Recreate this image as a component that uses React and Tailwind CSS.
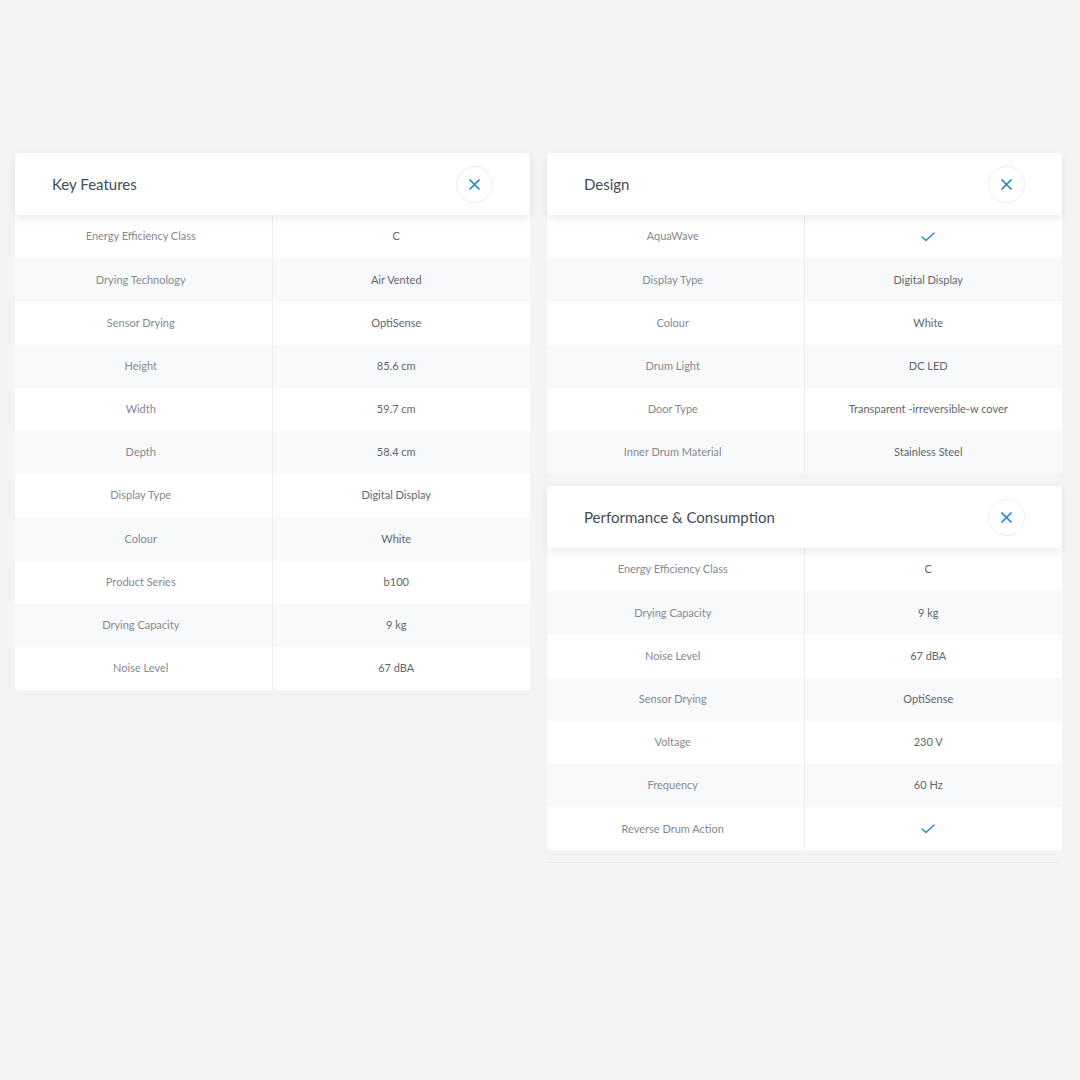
import React from 'react';

const keyFeatures = [
  ['Energy Efficiency Class', 'C'],
  ['Drying Technology', 'Air Vented'],
  ['Sensor Drying', 'OptiSense'],
  ['Height', '85.6 cm'],
  ['Width', '59.7 cm'],
  ['Depth', '58.4 cm'],
  ['Display Type', 'Digital Display'],
  ['Colour', 'White'],
  ['Product Series', 'b100'],
  ['Drying Capacity', '9 kg'],
  ['Noise Level', '67 dBA'],
];

const design = [
  ['AquaWave', true],
  ['Display Type', 'Digital Display'],
  ['Colour', 'White'],
  ['Drum Light', 'DC LED'],
  ['Door Type', 'Transparent -irreversible-w cover'],
  ['Inner Drum Material', 'Stainless Steel'],
];

const performance = [
  ['Energy Efficiency Class', 'C'],
  ['Drying Capacity', '9 kg'],
  ['Noise Level', '67 dBA'],
  ['Sensor Drying', 'OptiSense'],
  ['Voltage', '230 V'],
  ['Frequency', '60 Hz'],
  ['Reverse Drum Action', true],
];

const Check = () => (
  <svg width="14" height="10" viewBox="0 0 14 10" fill="none">
    <path d="M1 5 L5 8.6 L13 1" stroke="#1b88cf" strokeWidth="1.4" strokeLinecap="round" strokeLinejoin="round" />
  </svg>
);

const Close = () => (
  <button className="w-[37px] h-[37px] rounded-full border border-[#eceef1] bg-white flex items-center justify-center">
    <svg width="11" height="11" viewBox="0 0 11 11" fill="none">
      <path d="M1 1 L10 10 M10 1 L1 10" stroke="#1b88cf" strokeWidth="1.7" strokeLinecap="round" />
    </svg>
  </button>
);

/**
 * Bloco de especificações com cabeçalho e tabela de duas colunas.
 */
const SpecCard = ({ title, rows }) => (
  <div className="bg-white rounded-[4px]">
    <div className="relative z-10 h-[62px] bg-white rounded-[4px] shadow-[0_4px_10px_rgba(0,0,0,0.08)] flex items-center justify-between pl-[37px] pr-[37px]">
      <h3 className="text-[15px] text-[#434c56]">{title}</h3>
      <Close />
    </div>
    <div>
      {rows.map(([label, value], i) => (
        <div
          key={label}
          className={`grid grid-cols-2 h-[43.2px] text-[11px] ${i % 2 === 1 ? 'bg-[#f8f9fa]' : 'bg-white'} ${i === rows.length - 1 ? 'rounded-b-[4px]' : ''}`}
        >
          <div className="flex items-center justify-center pr-[5px] text-[#868a90] border-r border-[#eceef0]">{label}</div>
          <div className="flex items-center justify-center pr-[10px] text-[#62676e]">
            {value === true ? <Check /> : value}
          </div>
        </div>
      ))}
    </div>
  </div>
);

const App = () => (
  <div className="min-h-screen bg-[#f3f4f6] pt-[153px] px-[15px] pr-[18px]" style={{ fontFamily: 'Lato, "Noto Sans", sans-serif' }}>
    <div className="grid grid-cols-2 gap-[17px] items-start">
      <SpecCard title="Key Features" rows={keyFeatures} />
      <div className="flex flex-col">
        <SpecCard title="Design" rows={design} />
        <div className="mt-[12px]">
          <SpecCard title="Performance & Consumption" rows={performance} />
        </div>
        <div className="mt-[12px] h-px bg-[#e6e8eb] mr-[4px]" />
      </div>
    </div>
  </div>
);

export default App;
